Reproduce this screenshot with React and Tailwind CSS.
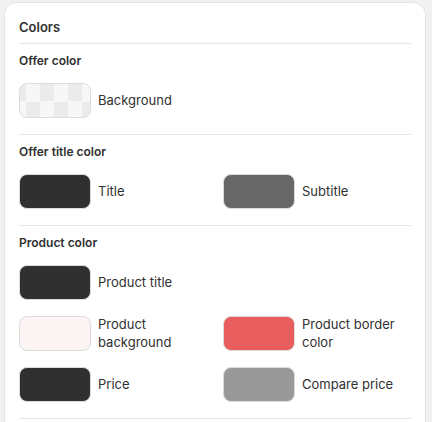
const CHECKER =
  "bg-[repeating-conic-gradient(#ebebeb_0_25%,#f7f7f7_0_50%)] bg-[length:28px_35px] bg-[position:6px_0]";

const SECTIONS = [
  {
    title: "Offer color",
    items: [{ label: "Background", swatch: CHECKER }],
  },
  {
    title: "Offer title color",
    items: [
      { label: "Title", swatch: "bg-[#303030]" },
      { label: "Subtitle", swatch: "bg-[#676767]" },
    ],
  },
  {
    title: "Product color",
    items: [
      { label: "Product title", swatch: "bg-[#303030]" },
      null,
      { label: "Product background", swatch: "bg-[#fdf4f4]" },
      { label: "Product border color", swatch: "bg-[#e85d5d]" },
      { label: "Price", swatch: "bg-[#303030]" },
      { label: "Compare price", swatch: "bg-[#999999]" },
    ],
  },
];

function ColorField({ label, swatch }) {
  return (
    <div className="flex items-center gap-[7px]">
      <button
        type="button"
        className={`h-[35px] w-[72px] shrink-0 rounded-[8px] border border-[#dcdcdc] ${swatch}`}
      />
      <span className="text-[13px] leading-[17.5px] text-[#303030]">{label}</span>
    </div>
  );
}

export default function App() {
  return (
    <div
      className="min-h-[422px] bg-[#f1f1f1] pl-[5px] pt-[3px]"
      style={{ fontFamily: "Inter, 'Noto Sans', sans-serif" }}
    >
      <div className="w-[420px] rounded-xl bg-white px-[14px] pt-[14px] shadow-[0_0_0_1px_rgba(0,0,0,0.05),0_1px_0_rgba(0,0,0,0.07)]">
        <h2 className="text-[13px] font-semibold leading-[20px] text-[#303030]">Colors</h2>
        <div className="mt-[6px] h-px bg-[#e6e6e6]" />

        {SECTIONS.map((section) => (
          <section key={section.title}>
            <div className="pb-[16px] pt-[9px]">
              <h3 className="text-[12px] font-semibold leading-4 text-[#303030]">{section.title}</h3>
              <div className="mt-[14px] grid grid-cols-2 gap-x-4 gap-y-4">
                {section.items.map((item, i) =>
                  item ? <ColorField key={item.label} {...item} /> : <div key={i} />
                )}
              </div>
            </div>
            <div className="h-px bg-[#e6e6e6]" />
          </section>
        ))}
        <div className="h-10" />
      </div>
    </div>
  );
}
